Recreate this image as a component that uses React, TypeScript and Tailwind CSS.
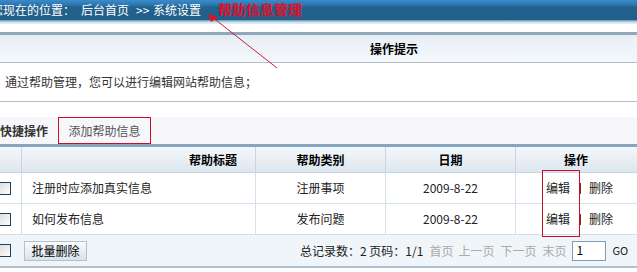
import React from 'react';

const rows = [
  { title: '注册时应添加真实信息', type: '注册事项', date: '2009-8-22' },
  { title: '如何发布信息', type: '发布问题', date: '2009-8-22' },
];

const Box: React.FC = () => (
  <span className="block w-[13px] h-[13px] border border-[#1c3f5e] bg-[linear-gradient(135deg,#dcdcdc,#ffffff)]" />
);

const App: React.FC = () => {
  return (
    <div
      className="relative w-[637px] h-[272px] overflow-hidden bg-white text-[12px] leading-none text-[#222]"
      style={{ fontFamily: '"Noto Sans CJK SC", "Noto Sans", sans-serif' }}
    >
      {/* Location bar */}
      <div className="h-[20px] flex items-center bg-[linear-gradient(to_bottom,#3a8ccc_0px,#2d75ac_5px,#22628e_7px,#215f88_20px)] text-white whitespace-nowrap">
        <span className="-ml-[9px] w-[90px]">您现在的位置：</span>
        <span className="w-[55px]">后台首页</span>
        <span className="w-[17px]">&gt;&gt;</span>
        <span>系统设置</span>
      </div>
      <div className="h-[4px] bg-[linear-gradient(to_bottom,#5a8fb5,#c6dbe8,#e8f0f6)]" />
      <div className="h-[8px] bg-white" />
      <div className="h-[3px] bg-[#8fa8ba]" />

      {/* Tip header */}
      <div className="h-[28px] flex items-center pl-[370px] font-bold text-black border-b border-[#b2bcc4] bg-[linear-gradient(to_bottom,#e6eef5,#f5f8fb)]">
        操作提示
      </div>
      <div className="h-[39px] flex items-center pl-[5px] border-b border-[#b2bcc4] text-[#333]">
        通过帮助管理，您可以进行编辑网站帮助信息；
      </div>

      {/* Quick actions */}
      <div className="mt-[15px] h-[27px] flex items-center bg-[#f7f7fb]">
        <span className="w-[58px] font-bold text-[#333]">快捷操作</span>
        <span className="h-[27px] w-[93px] flex items-center justify-center border border-[#c8102e] text-[#555]">
          添加帮助信息
        </span>
      </div>

      {/* Table */}
      <div className="border-t-[3px] border-[#86a6c0] -ml-[13px]">
        <div className="grid grid-cols-[35px_234px_130px_130px_130px] h-[26px] border-b border-[#c8d6e2] bg-[linear-gradient(to_bottom,#f3f7fa,#dde7ef)] font-bold text-black">
          <div className="border-r border-[#c8d6e2]" />
          <div className="border-r border-[#c8d6e2] flex items-center justify-end pr-[18px]">帮助标题</div>
          <div className="border-r border-[#c8d6e2] flex items-center justify-center">帮助类别</div>
          <div className="border-r border-[#c8d6e2] flex items-center justify-center">日期</div>
          <div className="flex items-center justify-start pl-[48px]">操作</div>
        </div>
        {rows.map((r) => (
          <div key={r.title} className="grid grid-cols-[35px_234px_130px_130px_130px] h-[31px] border-b border-[#d4e0ea]">
            <div className="border-r border-[#d4e0ea] flex items-center pl-[11px]"><Box /></div>
            <div className="border-r border-[#d4e0ea] flex items-center pl-[10px]">{r.title}</div>
            <div className="border-r border-[#d4e0ea] flex items-center justify-center">{r.type}</div>
            <div className="border-r border-[#d4e0ea] flex items-center justify-center">{r.date}</div>
            <div className="flex items-center pl-[30px]">
              <span>编辑</span>
              <span className="ml-[9px] w-[2px] h-[11px] bg-[#a01818]" />
              <span className="ml-[8px]">删除</span>
            </div>
          </div>
        ))}
        <div className="h-[33px] flex items-center border-b-2 border-[#b0c0cc] bg-[#f0f5f9]">
          <div className="w-[35px] pl-[11px]"><Box /></div>
          <button className="ml-[2px] h-[20px] w-[63px] border border-[#b4c0c8] bg-[linear-gradient(to_bottom,#fafbfc,#d8e2ea)] text-black">
            批量删除
          </button>
          <div className="ml-[213px] flex items-center whitespace-nowrap">
            <span>总记录数：2 页码：1/1</span>
            <span className="ml-[6px] text-[#aaa]">首页</span>
            <span className="ml-[5px] text-[#aaa]">上一页</span>
            <span className="ml-[6px] text-[#aaa]">下一页</span>
            <span className="ml-[6px] text-[#aaa]">末页</span>
            <span className="ml-[6px] w-[34px] h-[20px] border border-[#7f9db9] bg-white pl-[3px] pt-[2px] text-black">1</span>
            <span className="ml-[6px] text-[11px]">GO</span>
          </div>
        </div>
      </div>

      {/* Annotations */}
      <span className="absolute left-[218px] top-[2px] text-[14px] font-bold text-[#e0102a]" style={{ fontFamily: '"Noto Sans CJK SC", serif' }}>
        帮助信息管理
      </span>
      <svg className="absolute left-0 top-0" width="637" height="272">
        <line x1="212" y1="17" x2="277" y2="68" stroke="#cc1a3a" strokeWidth="1" />
        <polygon points="208,14 218,17 211,22" fill="#e0102a" />
      </svg>
      <span className="absolute left-[542px] top-[170px] w-[38px] h-[67px] border border-[#c8102e]" />
    </div>
  );
};

export default App;
